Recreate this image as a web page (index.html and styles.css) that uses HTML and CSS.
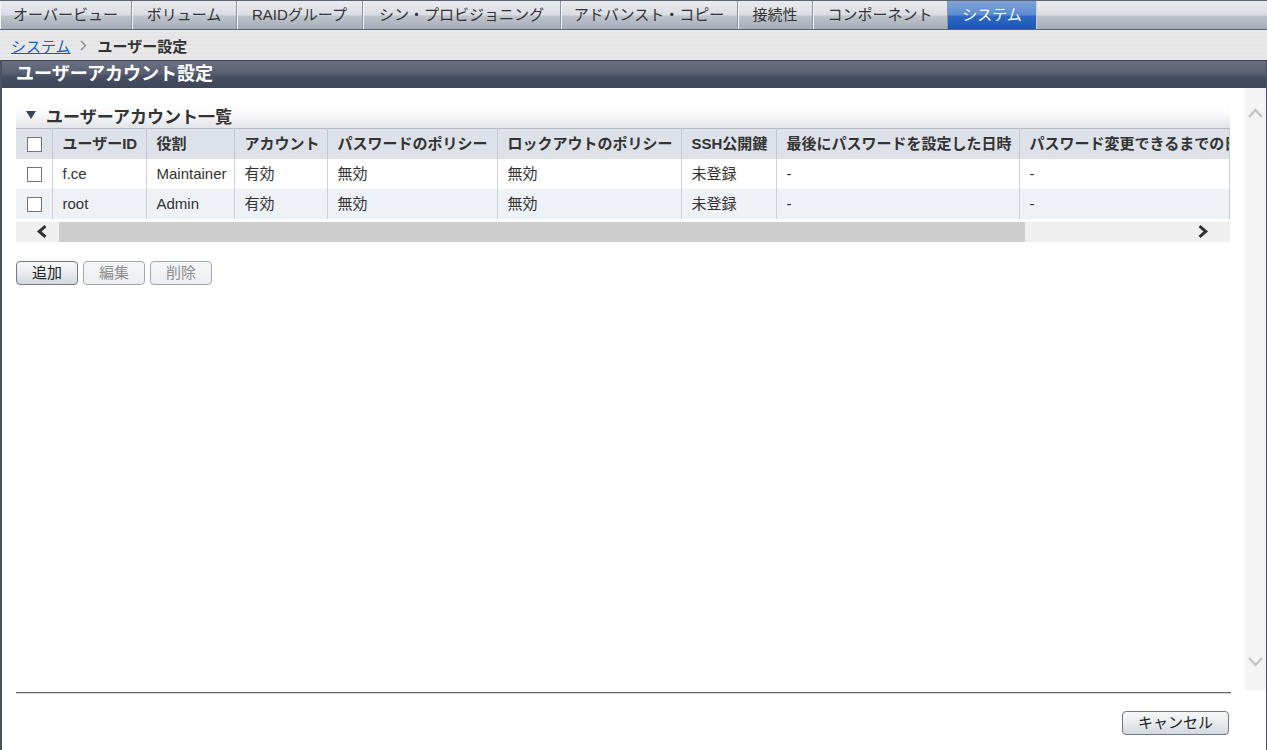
FILE: index.html
```html
<!DOCTYPE html>
<html lang="ja">
<head>
    <meta charset="UTF-8">
    <title>ユーザー設定</title>
    <link rel="stylesheet" href="styles.css">
</head>
<body>
    <div class="tabs">
        <div class="tab t-overview">オーバービュー</div>
        <div class="tab t-volume">ボリューム</div>
        <div class="tab t-raid">RAIDグループ</div>
        <div class="tab t-thin">シン・プロビジョニング</div>
        <div class="tab t-copy">アドバンスト・コピー</div>
        <div class="tab t-conn">接続性</div>
        <div class="tab t-comp">コンポーネント</div>
        <div class="tab t-system active">システム</div>
        <div class="tab-rest"></div>
    </div>

    <div class="crumbs">
        <a href="#">システム</a>
        <svg class="crumb-sep" width="7" height="11" viewBox="0 0 7 11"><path d="M1 1 L5.5 5.5 L1 10" fill="none" stroke="#8a8a8a" stroke-width="1.4"/></svg>
        <b>ユーザー設定</b>
    </div>

    <div class="page">
        <div class="page-title">ユーザーアカウント設定</div>

        <div class="body">
            <div class="content">
                <div class="section-title">
                    <svg class="tri" width="10" height="8" viewBox="0 0 10 8"><path d="M0 0 H10 L5 8 Z" fill="#3b4658"/></svg>
                    ユーザーアカウント一覧
                </div>

                <div class="grid-wrap">
                    <table class="grid">
                        <colgroup>
                            <col class="c-chk"><col class="c-id"><col class="c-role"><col class="c-acct">
                            <col class="c-pw"><col class="c-lock"><col class="c-ssh"><col class="c-last"><col class="c-days">
                        </colgroup>
                        <thead>
                            <tr>
                                <th class="chk"><span class="box"></span></th>
                                <th>ユーザーID</th>
                                <th>役割</th>
                                <th>アカウント</th>
                                <th>パスワードのポリシー</th>
                                <th>ロックアウトのポリシー</th>
                                <th>SSH公開鍵</th>
                                <th>最後にパスワードを設定した日時</th>
                                <th>パスワード変更できるまでの日数</th>
                            </tr>
                        </thead>
                        <tbody>
                            <tr>
                                <td class="chk"><span class="box"></span></td>
                                <td>f.ce</td>
                                <td>Maintainer</td>
                                <td>有効</td>
                                <td>無効</td>
                                <td>無効</td>
                                <td>未登録</td>
                                <td>-</td>
                                <td>-</td>
                            </tr>
                            <tr class="alt">
                                <td class="chk"><span class="box"></span></td>
                                <td>root</td>
                                <td>Admin</td>
                                <td>有効</td>
                                <td>無効</td>
                                <td>無効</td>
                                <td>未登録</td>
                                <td>-</td>
                                <td>-</td>
                            </tr>
                        </tbody>
                    </table>
                </div>

                <div class="hscroll">
                    <div class="hs-left">
                        <svg width="12" height="13" viewBox="0 0 12 13"><path d="M9.5 1.2 L3.2 6.5 L9.5 11.8" fill="none" stroke="#333" stroke-width="3"/></svg>
                    </div>
                    <div class="hs-thumb"></div>
                    <div class="hs-right">
                        <svg width="12" height="13" viewBox="0 0 12 13"><path d="M2.5 1.2 L8.8 6.5 L2.5 11.8" fill="none" stroke="#333" stroke-width="3"/></svg>
                    </div>
                </div>

                <div class="actions">
                    <button class="btn">追加</button>
                    <button class="btn" disabled>編集</button>
                    <button class="btn" disabled>削除</button>
                </div>
            </div>

            <div class="vscroll">
                <svg width="15" height="10" viewBox="0 0 15 10"><path d="M1 9 L7.5 2 L14 9" fill="none" stroke="#c6c6c6" stroke-width="2.5"/></svg>
                <svg width="15" height="10" viewBox="0 0 15 10"><path d="M1 1 L7.5 8 L14 1" fill="none" stroke="#c6c6c6" stroke-width="2.5"/></svg>
            </div>
        </div>

        <div class="footer">
            <div class="footer-bar">
                <button class="btn">キャンセル</button>
            </div>
        </div>
    </div>
</body>
</html>
```

FILE: styles.css
```css
* {
    box-sizing: border-box;
}
html, body {
    margin: 0;
    height: 100%;
}
body {
    font-family: "Liberation Sans", "Noto Sans CJK JP", sans-serif;
    font-size: 15px;
    color: #333;
    background: #fff;
    overflow: hidden;
}

/* top tabs */
.tabs {
    display: flex;
    height: 30px;
    border-top: 1px solid #5c6372;
    border-bottom: 1px solid #5c6372;
    background: linear-gradient(#e9ebef, #dadde3 48%, #bec3cc 55%, #a6acb8);
}
.tab {
    flex: none;
    text-align: center;
    line-height: 28px;
    white-space: nowrap;
    color: #333;
    border-right: 1px solid #8e95a2;
    box-shadow: inset 1px 0 0 #f4f5f7;
}
.t-overview { width: 132px; }
.t-volume { width: 105px; }
.t-raid { width: 126px; }
.t-thin { width: 198px; }
.t-copy { width: 177px; }
.t-conn { width: 75px; }
.t-comp { width: 135px; }
.t-system { width: 89px; }
.tab.active {
    color: #fff;
    background: linear-gradient(#7fa3d8, #5f8dd0 48%, #2d68c2 55%, #1b56b3);
    box-shadow: none;
    border-right-color: #c9ced6;
}
.tab-rest {
    flex: 1;
}

/* breadcrumb */
.crumbs {
    height: 30px;
    display: flex;
    align-items: center;
    padding-left: 11px;
    background: repeating-linear-gradient(#e9e9e9 0, #e9e9e9 2px, #e4e4e4 2px, #e4e4e4 4px);
}
.crumbs a {
    color: #1c5cbf;
    text-decoration: underline;
}
.crumb-sep {
    margin: 0 11px 0 9px;
}
.crumbs b {
    color: #333;
}

/* page frame */
.page {
    height: 690px;
    border-left: 2px solid #4b5262;
    border-right: 1px solid #4b5262;
    display: flex;
    flex-direction: column;
}
.page-title {
    height: 28px;
    padding-left: 14px;
    line-height: 27px;
    font-size: 18px;
    font-weight: bold;
    color: #fff;
    border-top: 1px solid #3a4150;
    background: linear-gradient(#6a7182, #596073 45%, #454d60 60%, #3f475a);
}
.body {
    height: 604px;
    display: flex;
}
.content {
    flex: 1;
    min-width: 0;
    padding: 16px 15px 0 14px;
}
.vscroll {
    width: 21px;
    height: 602px;
    background: #f4f4f4;
    display: flex;
    flex-direction: column;
    justify-content: space-between;
    align-items: center;
    padding: 20px 0 23px;
}

/* section */
.section-title {
    height: 24px;
    padding: 0 0 2px 10px;
    display: flex;
    align-items: center;
    font-size: 17px;
    font-weight: bold;
    color: #333;
    background: linear-gradient(#fff, #fbfbfc 35%, #e2e4e8);
}
.tri {
    margin-right: 10px;
}

/* table */
.grid-wrap {
    overflow: hidden;
    border-right: 1px solid #c8ced6;
}
.grid {
    width: 1263px;
    table-layout: fixed;
    border-collapse: collapse;
}
.c-chk { width: 36px; }
.c-id { width: 94px; }
.c-role { width: 88px; }
.c-acct { width: 93px; }
.c-pw { width: 170px; }
.c-lock { width: 184px; }
.c-ssh { width: 95px; }
.c-last { width: 243px; }
.c-days { width: 260px; }
.grid th, .grid td {
    height: 30px;
    padding: 0 10px;
    text-align: left;
    white-space: nowrap;
    overflow: hidden;
    line-height: 20px;
}
.grid th {
    font-weight: bold;
    background: #dde1e8;
    border-top: 1px solid #b3bbc7;
    border-right: 1px solid #c2c9d3;
}
.grid td {
    background: #fff;
    border-right: 1px solid #ccd2da;
}
.grid tr.alt td {
    background: #eef1f5;
}
.grid .chk {
    padding: 0;
    text-align: center;
}
.box {
    display: inline-block;
    width: 15px;
    height: 15px;
    border: 1px solid #747474;
    background: #fff;
    vertical-align: middle;
    margin-left: 1px;
}

/* horizontal scroller */
.hscroll {
    margin-top: 3px;
    height: 20px;
    display: flex;
    align-items: center;
    background: #f0f0f0;
}
.hs-left {
    width: 43px;
    height: 20px;
    padding-left: 20px;
    display: flex;
    align-items: center;
}
.hs-thumb {
    width: 966px;
    height: 20px;
    background: #cdcdcd;
}
.hs-right {
    margin-left: auto;
    padding-right: 21px;
    display: flex;
    align-items: center;
}

/* buttons */
.actions {
    margin-top: 19px;
    display: flex;
    gap: 5px;
}
.btn {
    height: 24px;
    padding: 0 15px;
    font-family: "Liberation Sans", "Noto Sans CJK JP", sans-serif;
    font-size: 15px;
    line-height: 20px;
    color: #222;
    border: 1px solid #737882;
    border-radius: 4px;
    background: linear-gradient(#f7f8fa, #e8ebef 50%, #d3d9e1);
    cursor: pointer;
}
.btn:disabled {
    color: #8e8e8e;
    border-color: #a2a6ad;
    background: linear-gradient(#f5f6f7, #eceef1);
    cursor: default;
}

/* footer */
.footer {
    flex: 1;
    padding: 0 35px 0 14px;
}
.footer-bar {
    border-top: 1px solid #666;
    background: linear-gradient(#d8d8d8, #d8d8d8) top / 100% 1px no-repeat;
    padding: 18px 2px 0 0;
    display: flex;
    justify-content: flex-end;
}
```
